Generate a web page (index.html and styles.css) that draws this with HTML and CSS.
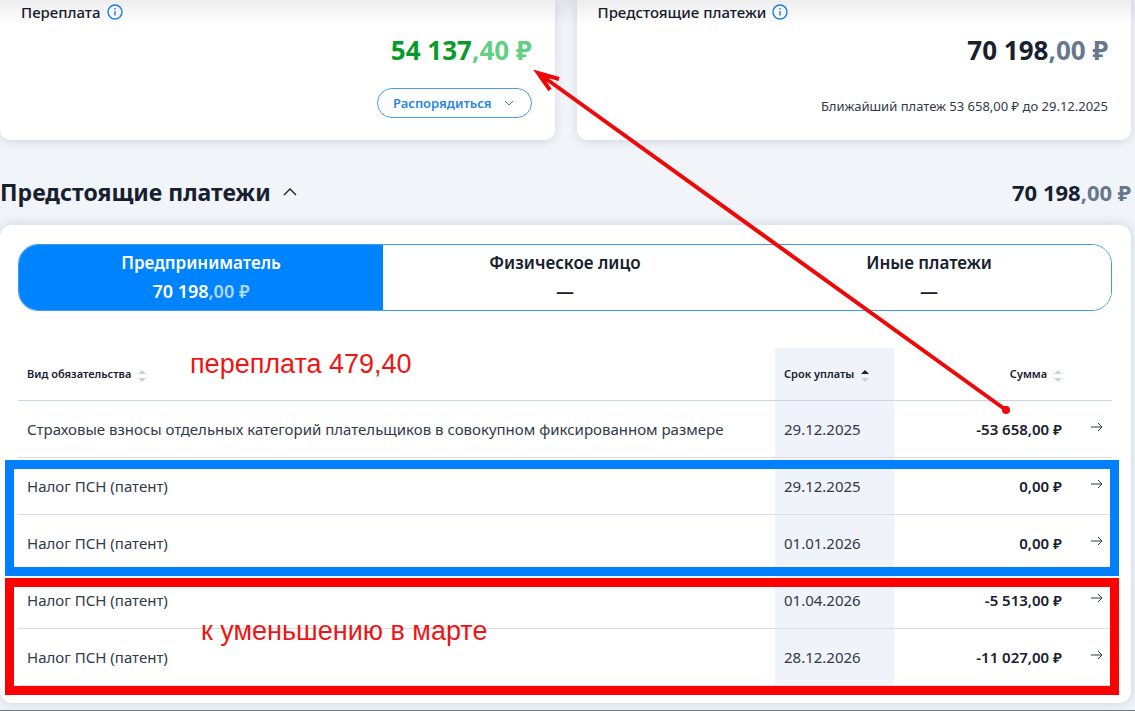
FILE: index.html
```
<!DOCTYPE html>
<html lang="ru">
<head>
    <meta charset="UTF-8">
    <meta name="viewport" content="width=device-width, initial-scale=1">
    <title>Предстоящие платежи</title>
    <link rel="stylesheet" href="styles.css">
</head>
<body>
    <main class="page">
        <!-- Balance cards -->
        <div class="cards">
            <section class="card">
                <h2 class="card-title">Переплата
                    <svg class="info" viewBox="0 0 16 16"><circle cx="8" cy="8" r="7"/><path d="M8 7v4.5M8 4v1.5"/></svg>
                </h2>
                <div class="card-sum green">54 137<span>,40 ₽</span></div>
                <button class="manage-btn" type="button">Распорядиться
                    <svg class="chevron" viewBox="0 0 10 10"><path d="M1 3l4 4 4-4"/></svg>
                </button>
            </section>
            <section class="card">
                <h2 class="card-title">Предстоящие платежи
                    <svg class="info" viewBox="0 0 16 16"><circle cx="8" cy="8" r="7"/><path d="M8 7v4.5M8 4v1.5"/></svg>
                </h2>
                <div class="card-sum">70 198<span>,00 ₽</span></div>
                <p class="card-note">Ближайший платеж 53 658,00 ₽ до 29.12.2025</p>
            </section>
        </div>

        <div class="section-head">
            <h1>Предстоящие платежи
                <svg class="collapse" viewBox="0 0 14 14"><path d="M1 10l6-6 6 6"/></svg>
            </h1>
            <div class="section-sum">70 198<span>,00 ₽</span></div>
        </div>

        <section class="payments">
            <div class="tabs">
                <button class="tab active" type="button">Предприниматель<b>70 198<span>,00 ₽</span></b></button>
                <button class="tab" type="button">Физическое лицо<b>—</b></button>
                <button class="tab" type="button">Иные платежи<b>—</b></button>
            </div>

            <table class="table">
                <thead>
                    <tr>
                        <th class="col-name">Вид обязательства <svg class="sort" viewBox="0 0 8 12"><path d="M0 4l4-4 4 4z"/><path d="M0 8l4 4 4-4z"/></svg></th>
                        <th class="col-date">Срок уплаты <svg class="sort up" viewBox="0 0 8 12"><path d="M0 4l4-4 4 4z"/><path d="M0 8l4 4 4-4z"/></svg></th>
                        <th class="col-sum">Сумма <svg class="sort" viewBox="0 0 8 12"><path d="M0 4l4-4 4 4z"/><path d="M0 8l4 4 4-4z"/></svg></th>
                        <th class="col-go"></th>
                    </tr>
                </thead>
                <tbody>
                    <tr>
                        <td class="col-name">Страховые взносы отдельных категорий плательщиков в совокупном фиксированном размере</td>
                        <td class="col-date">29.12.2025</td>
                        <td class="col-sum">-53 658,00 ₽</td>
                        <td class="col-go"><a href="#" aria-label="Подробнее"><svg viewBox="0 0 12 10"><path d="M0 5h11M7 1l4 4-4 4"/></svg></a></td>
                    </tr>
                    <tr>
                        <td class="col-name">Налог ПСН (патент)</td>
                        <td class="col-date">29.12.2025</td>
                        <td class="col-sum">0,00 ₽</td>
                        <td class="col-go"><a href="#" aria-label="Подробнее"><svg viewBox="0 0 12 10"><path d="M0 5h11M7 1l4 4-4 4"/></svg></a></td>
                    </tr>
                    <tr>
                        <td class="col-name">Налог ПСН (патент)</td>
                        <td class="col-date">01.01.2026</td>
                        <td class="col-sum">0,00 ₽</td>
                        <td class="col-go"><a href="#" aria-label="Подробнее"><svg viewBox="0 0 12 10"><path d="M0 5h11M7 1l4 4-4 4"/></svg></a></td>
                    </tr>
                    <tr>
                        <td class="col-name">Налог ПСН (патент)</td>
                        <td class="col-date">01.04.2026</td>
                        <td class="col-sum">-5 513,00 ₽</td>
                        <td class="col-go"><a href="#" aria-label="Подробнее"><svg viewBox="0 0 12 10"><path d="M0 5h11M7 1l4 4-4 4"/></svg></a></td>
                    </tr>
                    <tr>
                        <td class="col-name">Налог ПСН (патент)</td>
                        <td class="col-date">28.12.2026</td>
                        <td class="col-sum">-11 027,00 ₽</td>
                        <td class="col-go"><a href="#" aria-label="Подробнее"><svg viewBox="0 0 12 10"><path d="M0 5h11M7 1l4 4-4 4"/></svg></a></td>
                    </tr>
                </tbody>
            </table>
        </section>

        <!-- Marks drawn over the page -->
        <div class="mark mark-blue"></div>
        <div class="mark mark-red"></div>
        <div class="note note-top">переплата 479,40</div>
        <div class="note note-bottom">к уменьшению в марте</div>
        <svg class="arrow" width="1135" height="711" viewBox="0 0 1135 711">
            <path d="M1006 410L538 73M559 79L538 73L550 90"/>
            <circle cx="1006" cy="410" r="4"/>
        </svg>
    </main>
</body>
</html>
```
FILE: styles.css
```
* {
    box-sizing: border-box;
}
body {
    margin: 0;
    background: #f1f4f9;
    color: #16202e;
    font-family: "Noto Sans", "Open Sans", sans-serif;
    font-size: 15px;
}
h1, h2, p {
    margin: 0;
}
button {
    font-family: inherit;
    cursor: pointer;
}
svg {
    fill: none;
    stroke: currentColor;
}
.page {
    position: relative;
    padding-right: 4px;
    padding-bottom: 7px;
    border-bottom: 1px solid #70757d;
    overflow: hidden;
}
.page::before {
    content: "";
    position: absolute;
    top: 0;
    left: 0;
    right: 0;
    height: 26px;
    background: linear-gradient(rgba(0, 0, 0, 0.07), rgba(0, 0, 0, 0));
}
.cards {
    display: grid;
    grid-template-columns: 1fr 1fr;
    gap: 22px;
}
.card {
    display: flex;
    flex-direction: column;
    align-items: flex-end;
    height: 140px;
    padding: 1px 23px 0 21px;
    background: white;
    border-radius: 0 0 10px 10px;
    box-shadow: 0 2px 10px rgba(40, 55, 90, 0.14);
}
.card-title {
    display: flex;
    align-items: center;
    align-self: flex-start;
    gap: 6px;
    font-size: 15px;
    font-weight: 500;
    line-height: 22px;
}
.info {
    width: 16px;
    height: 16px;
    color: #1b82e8;
    stroke-width: 1.4;
}
.card-sum {
    margin-top: 10px;
    font-size: 26px;
    font-weight: 700;
    line-height: 34px;
}
.card-sum span, .section-sum span {
    color: #68778d;
}
.card-sum.green {
    color: #0a9a2c;
}
.card-sum.green span {
    color: #62d083;
}
.manage-btn {
    display: flex;
    align-items: center;
    gap: 12px;
    height: 30px;
    margin-top: 21px;
    padding: 0 17px 0 15px;
    background: white;
    border: 1px solid #4a9ce0;
    border-radius: 15px;
    color: #2b86dd;
    font-size: 13px;
    font-weight: 600;
}
.chevron {
    width: 10px;
    height: 10px;
}
.card-note {
    margin-top: 29px;
    color: #303a48;
    font-size: 13px;
    line-height: 20px;
}
.section-head {
    display: flex;
    align-items: center;
    justify-content: space-between;
    height: 85px;
    padding-top: 18px;
}
.section-head h1 {
    display: flex;
    align-items: center;
    gap: 12px;
    font-size: 23px;
    font-weight: 700;
}
.collapse {
    width: 14px;
    height: 14px;
    stroke-width: 1.4;
}
.section-sum {
    font-size: 22px;
    font-weight: 700;
}
.payments {
    padding: 19px 19px 17px 18px;
    background: white;
    border-radius: 12px;
    box-shadow: 0 0 12px rgba(40, 55, 90, 0.18);
}
.tabs {
    display: grid;
    grid-template-columns: repeat(3, 1fr);
    border: 1px solid #409be4;
    border-radius: 20px;
    overflow: hidden;
}
.tab {
    height: 65px;
    padding: 0 0 2px;
    background: white;
    border: 0;
    color: #16202e;
    font-size: 17px;
    font-weight: 600;
    line-height: 28px;
}
.tab b {
    display: block;
    font-size: 18px;
    font-weight: 600;
}
.tab.active {
    background: #0083ff;
    color: white;
}
.tab.active span {
    color: #b3d9ff;
}
.table {
    width: 100%;
    margin-top: 37px;
    border-spacing: 0;
}
.table th {
    height: 53px;
    padding: 0 9px;
    border-bottom: 1px solid #ccd4dd;
    font-size: 11px;
    font-weight: 600;
    text-align: left;
}
.table td {
    height: 57px;
    padding: 0 9px;
    border-bottom: 1px solid #d8dee5;
    color: #303a48;
}
.table .col-date {
    width: 119px;
    background: #f0f3f9;
}
.table .col-sum {
    width: 177px;
    text-align: right;
}
.table td.col-sum {
    color: #16202e;
    font-weight: 600;
}
.table .col-go {
    width: 41px;
    padding: 0 9px 6px 0;
    text-align: right;
}
.col-go a {
    color: #303a48;
}
.col-go svg {
    width: 12px;
    height: 10px;
}
.sort {
    width: 8px;
    height: 12px;
    margin-left: 4px;
    fill: #cbd2dc;
    stroke: none;
    vertical-align: middle;
}
.sort.up path:first-child {
    fill: #16202e;
}
.mark {
    position: absolute;
    left: 5px;
    right: 16px;
    border: 9px solid #0080ff;
    pointer-events: none;
}
.mark-blue {
    top: 460px;
    height: 116px;
}
.mark-red {
    top: 578px;
    height: 117px;
    border-color: #ff0000;
}
.note {
    position: absolute;
    color: #f01414;
    font-family: "Liberation Sans", Arial, sans-serif;
    font-size: 27px;
    line-height: 32px;
}
.note-top {
    top: 348px;
    left: 190px;
}
.note-bottom {
    top: 615px;
    left: 201px;
}
.arrow {
    position: absolute;
    top: 0;
    left: 0;
    color: #ee0808;
    stroke-width: 4;
    pointer-events: none;
}
.arrow circle {
    fill: currentColor;
    stroke: none;
}
```
